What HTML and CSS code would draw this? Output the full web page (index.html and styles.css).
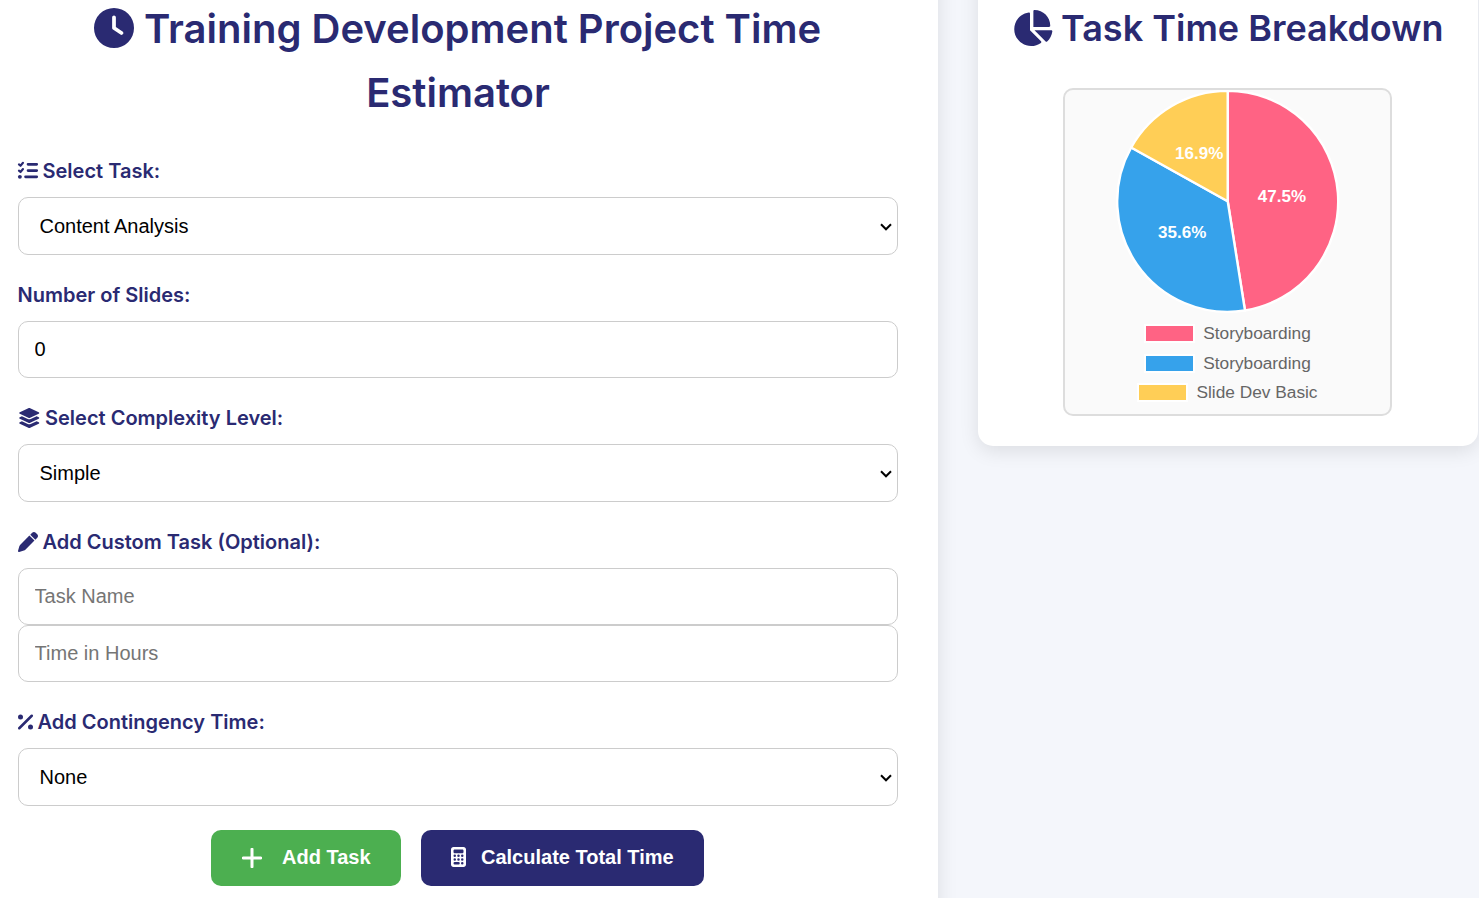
FILE: index.html
```html
<!DOCTYPE html>
<html lang="en">
<head>
<meta charset="utf-8">
<title>Training Development Project Time Estimator</title>
<link rel="stylesheet" href="styles.css">
</head>
<body>
<main class="layout">
  <section class="card estimator">
    <h1 class="title"><svg class="icon" viewBox="0 0 512 512"><path fill-rule="evenodd" d="M256 0a256 256 0 1 1 0 512A256 256 0 1 1 256 0zM232 120V256c0 8 4 15.5 10.7 20l96 64c11 7.4 25.9 4.4 33.3-6.7s4.4-25.9-6.7-33.3L280 243.2V120c0-13.3-10.7-24-24-24s-24 10.7-24 24z"/></svg> Training Development Project Time Estimator</h1>
    <div class="field">
      <label class="label" for="task"><svg class="icon" viewBox="0 0 512 512"><path fill="none" stroke="currentColor" stroke-width="54" stroke-linecap="round" stroke-linejoin="round" d="M24 86l40 36 64-76M24 246l40 36 64-76"/><path fill="none" stroke="currentColor" stroke-width="68" stroke-linecap="round" d="M256 86h224M256 246h224M192 406h288"/><circle cx="48" cy="406" r="50"/></svg> Select Task:</label>
      <div class="picker"><select class="control select" id="task"><option>Content Analysis</option></select><svg class="arrow" viewBox="0 0 12 8"><path d="M1 1.300l5 5 5-5"/></svg></div>
    </div>
    <div class="field">
      <label class="label" for="slides">Number of Slides:</label>
      <input class="control" id="slides" type="text" value="0">
    </div>
    <div class="field">
      <label class="label" for="level"><svg class="icon icon-wide" viewBox="0 0 576 512"><path d="M264.5 5.2c14.9-6.9 32.1-6.9 47 0l218.6 101c8.5 3.9 13.9 12.4 13.9 21.8s-5.4 17.9-13.9 21.8l-218.6 101c-14.9 6.9-32.1 6.9-47 0L45.9 149.8C37.4 145.8 32 137.3 32 128s5.4-17.9 13.9-21.8L264.5 5.2zM476.9 209.6l53.2 24.6c8.5 3.9 13.9 12.4 13.9 21.8s-5.4 17.9-13.9 21.8l-218.6 101c-14.9 6.9-32.1 6.9-47 0L45.9 277.8C37.4 273.8 32 265.3 32 256s5.4-17.9 13.9-21.8l53.2-24.6 152 70.2c23.4 10.8 50.4 10.8 73.8 0l152-70.2zm-152 198.2l152-70.2 53.2 24.6c8.5 3.9 13.9 12.4 13.9 21.8s-5.4 17.9-13.9 21.8l-218.6 101c-14.9 6.9-32.1 6.9-47 0L45.9 405.8C37.4 401.8 32 393.3 32 384s5.4-17.9 13.9-21.8l53.2-24.6 152 70.2c23.4 10.8 50.4 10.8 73.8 0z"/></svg> Select Complexity Level:</label>
      <div class="picker"><select class="control select" id="level"><option>Simple</option></select><svg class="arrow" viewBox="0 0 12 8"><path d="M1 1.300l5 5 5-5"/></svg></div>
    </div>
    <div class="field">
      <label class="label" for="custom"><svg class="icon" viewBox="0 0 512 512"><path d="M362.7 19.3L314.3 67.7 444.3 197.7l48.4-48.4c25-25 25-65.5 0-90.5L453.3 19.3c-25-25-65.5-25-90.5 0zm-71 71L58.6 323.5c-10.4 10.4-18 23.3-22.2 37.4L1 481.2C-1.5 489.7 .8 498.8 7 505s15.3 8.5 23.7 6.1l120.3-35.4c14.1-4.2 27-11.8 37.4-22.2L421.7 220.3 291.7 90.3z"/></svg> Add Custom Task (Optional):</label>
      <input class="control" id="custom" type="text" placeholder="Task Name">
      <input class="control" type="text" placeholder="Time in Hours">
    </div>
    <div class="field">
      <label class="label" for="extra"><svg class="icon icon-narrow" viewBox="0 0 384 512"><path fill="none" stroke="currentColor" stroke-width="64" stroke-linecap="round" d="M32 416L352 96"/><circle cx="64" cy="128" r="64"/><circle cx="320" cy="384" r="64"/></svg> Add Contingency Time:</label>
      <div class="picker"><select class="control select" id="extra"><option>None</option></select><svg class="arrow" viewBox="0 0 12 8"><path d="M1 1.300l5 5 5-5"/></svg></div>
    </div>
    <div class="actions">
      <button class="button button-add"><svg class="plus" viewBox="0 0 20 20"><path d="M10 1.2v17.6M1.2 10h17.6"/></svg>Add Task</button>
      <button class="button button-total"><svg class="icon icon-narrow" viewBox="0 0 384 512"><path fill-rule="evenodd" d="M64 0C28.700 0 0 28.700 0 64V448c0 35.300 28.700 64 64 64H320c35.300 0 64-28.700 64-64V64c0-35.300-28.700-64-64-64H64zM96 64H288c17.700 0 32 14.300 32 32v32c0 17.700-14.300 32-32 32H96c-17.700 0-32-14.300-32-32V96c0-17.700 14.300-32 32-32zM64 224a32 32 0 1 1 64 0 32 32 0 1 1-64 0zM160 224a32 32 0 1 1 64 0 32 32 0 1 1-64 0zM256 224a32 32 0 1 1 64 0 32 32 0 1 1-64 0zM64 320a32 32 0 1 1 64 0 32 32 0 1 1-64 0zM160 320a32 32 0 1 1 64 0 32 32 0 1 1-64 0zM256 320a32 32 0 1 1 64 0 32 32 0 1 1-64 0zM96 384h96a32 32 0 1 1 0 64H96a32 32 0 1 1 0-64zM256 416a32 32 0 1 1 64 0 32 32 0 1 1-64 0z"/></svg>Calculate Total Time</button>
    </div>
  </section>
  <aside class="card breakdown">
    <h2 class="subtitle"><svg class="icon icon-wide" viewBox="0 0 576 512"><path d="M304 240V16.600c0-9 7-16.600 16-16.600C443.700 0 544 100.300 544 224c0 9-7.600 16-16.600 16H304zM32 272C32 150.700 122.100 50.300 239 34.300c9.200-1.300 17 6.100 17 15.400V288L412.500 444.500c6.700 6.700 6.200 17.700-1.500 23.100C371.800 495.600 323.800 512 272 512C139.500 512 32 404.600 32 272zm526.400 16c9.300 0 16.600 7.800 15.400 17c-7.700 55.900-34.600 105.600-73.900 142.300c-6 5.600-15.400 5.200-21.200-.7L320 288H558.400z"/></svg> Task Time Breakdown</h2>
    <div class="chart">
      <svg class="pie" viewBox="-111.700 -111.300 224 224">
        <g stroke="#fff" stroke-width="2.400" stroke-linejoin="round">
          <path fill="#ff6384" d="M0 0V-110.500A110.500 110.500 0 0 1 17.290 109.140Z"/>
          <path fill="#36a2eb" d="M0 0L17.290 109.140A110.500 110.500 0 0 1 -96.520 -53.800Z"/>
          <path fill="#ffce56" d="M0 0L-96.520 -53.800A110.500 110.500 0 0 1 0 -110.500Z"/>
        </g>
        <g class="share">
          <text x="54.200" y="0.500">47.5%</text>
          <text x="-45.500" y="36.500">35.6%</text>
          <text x="-28.500" y="-42.500">16.9%</text>
        </g>
      </svg>
      <ul class="legend">
        <li class="entry"><span class="swatch pink"></span>Storyboarding</li>
        <li class="entry"><span class="swatch blue"></span>Storyboarding</li>
        <li class="entry"><span class="swatch yellow"></span>Slide Dev Basic</li>
      </ul>
    </div>
  </aside>
</main>
</body>
</html>
```
FILE: styles.css
```css
* { box-sizing: border-box; }
body {
  margin: 0;
  height: 898px;
  overflow: hidden;
  background: #f4f6fb;
  color: #2a2a72;
  font-family: Inter, "Liberation Sans", sans-serif;
}
.layout {
  display: flex;
  align-items: flex-start;
  gap: 40px;
  margin-left: -22px;
}
.card {
  flex: none;
  background: #fff;
  box-shadow: 0 5px 19px rgba(0, 0, 0, 0.1);
}
.estimator {
  width: 960px;
  height: 960px;
  margin-top: -43px;
  padding: 40px;
}
.breakdown {
  width: 500px;
  height: 486px;
  margin-top: -40px;
  padding: 40px 0 0;
  border-radius: 15px;
}
.title, .subtitle {
  margin: 0;
  font-weight: 600;
  text-align: center;
  text-indent: -1px;
}
.title {
  margin-bottom: 30px;
  font-size: 40px;
  line-height: 64px;
}
.subtitle {
  margin-bottom: 31px;
  font-size: 36px;
  line-height: 57px;
  white-space: nowrap;
}
.icon {
  width: 1em;
  height: 1em;
  vertical-align: -0.125em;
  fill: currentColor;
  overflow: visible;
}
.icon-wide { width: 1.125em; }
.icon-narrow { width: 0.75em; }
.field {
  display: flex;
  flex-direction: column;
  margin-bottom: 24px;
}
.label {
  margin-bottom: 10px;
  font-size: 20px;
  font-weight: 600;
  line-height: 32px;
  text-indent: -0.5px;
}
.control {
  width: 100%;
  height: 57px;
  padding: 16px 15.600px;
  border: 1px solid #ccc;
  border-radius: 10px;
  background: #fff;
  color: #000;
  font: 20px "Liberation Sans", Arial, sans-serif;
}
.control::placeholder { color: #757575; }
.picker {
  position: relative;
  height: 58px;
}
.select {
  height: 58px;
  padding-left: 20.500px;
  appearance: none;
}
.arrow {
  position: absolute;
  top: 26px;
  right: 6px;
  width: 12px;
  height: 8px;
  fill: none;
  stroke: #000;
  stroke-width: 2;
  pointer-events: none;
}
.actions {
  display: flex;
  justify-content: center;
  gap: 20px;
  padding-right: 1px;
}
.button {
  display: flex;
  align-items: center;
  height: 56px;
  padding: 0 30px 2px;
  border: 0;
  border-radius: 10px;
  color: #fff;
  font: bold 20px "Liberation Sans", Arial, sans-serif;
}
.button-add { width: 190px; background: #4caf50; }
.button-total { width: 283px; background: #2a2a72; }
.button .icon { margin-right: 15px; }
.plus {
  width: 20px;
  height: 20px;
  margin: 2px 20px 0 1px;
  fill: none;
  stroke: #fff;
  stroke-width: 3;
  stroke-linecap: round;
}
.chart {
  display: flex;
  flex-direction: column;
  align-items: center;
  width: 329px;
  height: 328px;
  margin: 0 0 0 85px;
  border: 2px solid #ddd;
  border-radius: 10px;
  background: #fafafa;
}
.pie {
  width: 224px;
  height: 224px;
  margin-top: -0.5px;
}
.share {
  fill: #fff;
  font: bold 17px "Liberation Sans", Arial, sans-serif;
  text-anchor: middle;
}
.legend {
  margin: 5.300px 0 0;
  padding: 0;
  list-style: none;
  color: #666;
  font: 17.300px "Liberation Sans", Arial, sans-serif;
}
.entry {
  display: flex;
  align-items: center;
  justify-content: center;
  gap: 8px;
  height: 29.500px;
}
.swatch {
  width: 51px;
  height: 19px;
  border: 2px solid #fff;
}
.pink { background: #ff6384; }
.blue { background: #36a2eb; }
.yellow { background: #ffce56; }
```
